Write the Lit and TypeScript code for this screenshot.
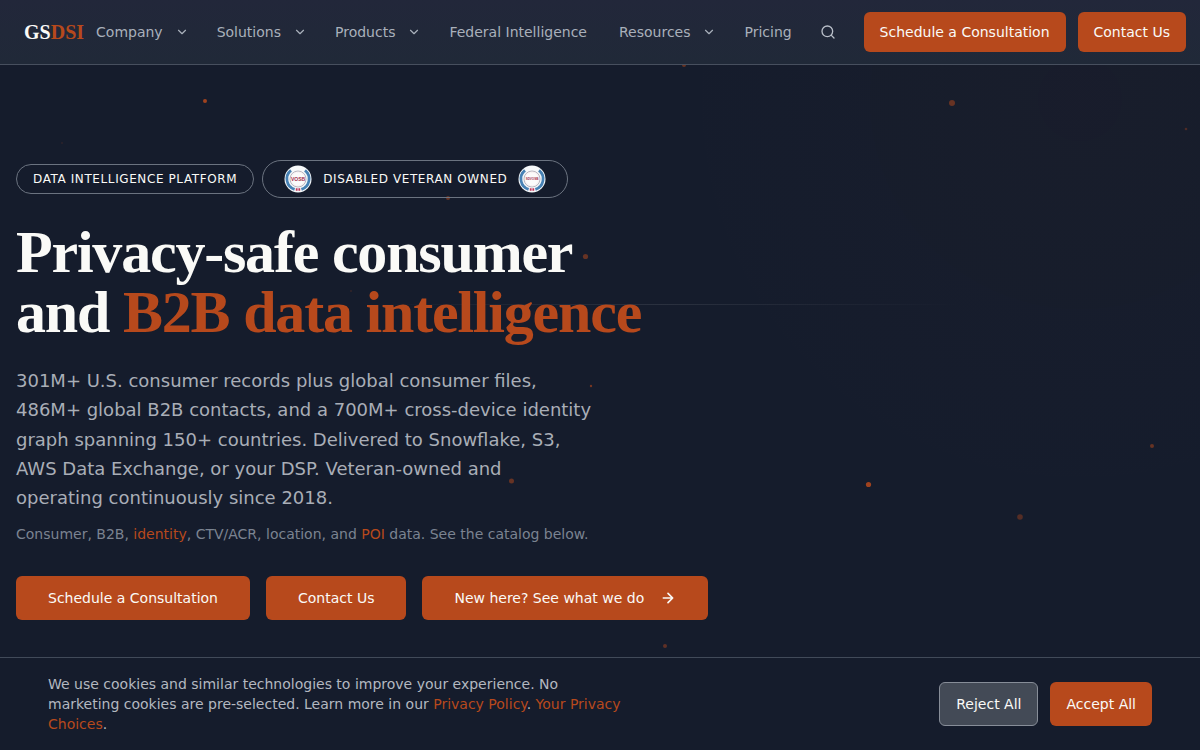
import { LitElement, html, css, svg } from "lit";
import { customElement, property } from "lit/decorators.js";

const chevron = html`<svg class="chevron" viewBox="0 0 24 24" aria-hidden="true"><path d="m6 9 6 6 6-6" /></svg>`;

@customElement("owner-seal")
class OwnerSeal extends LitElement {
  @property() label = "";

  static styles = css`
    :host { display: block; width: 28px; height: 28px; letter-spacing: 0; }
    .seal { display: block; width: 100%; height: 100%; }
    .name { font: bold 5px "Liberation Sans", Arial, sans-serif; fill: #a32c4c; }
    .small { font-size: 3px; }
  `;

  render() {
    const long = this.label.length > 4;
    return html`<svg class="seal" viewBox="0 0 28 28" role="img" aria-label=${this.label}>
      <circle cx="14" cy="14" r="13.5" fill="#f7f9fa" />
      <path d="M7 5.4A11 11 0 0 0 10.6 24.4" fill="none" stroke="#4681b4" stroke-width="2.8" />
      <path d="M21 5.4A11 11 0 0 1 17.4 24.4" fill="none" stroke="#4681b4" stroke-width="2.8" />
      <path d="M7.5 7.2A9.5 9.5 0 0 0 10 22.5M20.500 7.2A9.5 9.5 0 0 1 18 22.500" fill="none" stroke="#dbe8f1" stroke-width=".7" stroke-dasharray="1 1" />
      <circle cx="14" cy="14" r="8" fill="#fbfbfb" stroke="#9a97a3" stroke-width=".7" />
      <circle cx="14" cy="14" r="6.8" fill="none" stroke="#ecd3d7" stroke-width=".5" stroke-dasharray="1 .8" />
      <text class="name ${long ? "small" : ""}" x="14" y=${long ? 15 : 15.8} text-anchor="middle">${this.label}</text>
      <path d="M11.8 23.2h1.8v2.6h-1.8zM14.4 23.2h1.8v2.6h-1.8z" fill="#c0355a" />
    </svg>`;
  }
}

@customElement("app-root")
class AppRoot extends LitElement {
  static styles = css`
    :host {
      display: flex;
      flex-direction: column;
      min-height: 100vh;
      background: #151c2c;
      color: #fafaf7;
      font: 14px/20px "DejaVu Sans", Verdana, sans-serif;
    }
    * { box-sizing: border-box; }
    a { color: inherit; text-decoration: none; }
    .header {
      display: flex;
      align-items: center;
      height: 65px;
      padding: 0 14px 0 24px;
      background: linear-gradient(180deg, #22273a, #202938);
      border-bottom: 1px solid #474f5e;
      position: relative;
      z-index: 1;
    }
    .brand { font: bold 20px/28px "Liberation Serif", "Times New Roman", serif; margin-right: 12px; }
    .accent { color: #b7491c; }
    .nav { display: flex; align-items: center; gap: 32px; color: #a9b0bb; white-space: nowrap; }
    .menu {
      display: flex;
      align-items: center;
      gap: 12px;
      margin-right: -4px;
      padding: 0;
      border: 0;
      background: none;
      color: inherit;
      font: inherit;
    }
    .chevron, .arrow, .glass { fill: none; stroke: currentColor; stroke-width: 2; stroke-linecap: round; stroke-linejoin: round; }
    .chevron { width: 14px; height: 14px; }
    .arrow, .glass { width: 16px; height: 16px; display: block; }
    .arrow { stroke-width: 2.5; }
    .search { margin: 0 auto; padding: 0; border: 0; background: none; color: #b9bfc9; }
    .actions { display: flex; gap: 12px; }
    .btn {
      display: inline-flex;
      align-items: center;
      justify-content: center;
      gap: 16px;
      height: 44px;
      padding: 0 32px;
      border: 0;
      border-radius: 6px;
      background: #b7491c;
      color: #fafaf7;
      font: inherit;
      white-space: nowrap;
    }
    .compact { height: 40px; padding: 0 16px; }
    .choice { padding: 0 16px; }
    .quiet { background: #434a56; border: 1px solid #878d98; }
    .hero {
      flex: 1;
      position: relative;
      padding: 95px 16px 130px;
      background:
        radial-gradient(circle at 90% 5%, rgba(183, 73, 28, .02), transparent 420px),
        #151c2c;
    }
    .sky { position: absolute; inset: 0; width: 100%; height: 100%; overflow: hidden; fill: #b7491c; }
    .content { position: relative; }
    .pills { display: flex; align-items: center; gap: 8px; }
    .pill {
      display: flex;
      align-items: center;
      gap: 11px;
      padding: 6px 16px;
      border: 1px solid #6b7380;
      border-radius: 20px;
      font-size: 12px;
      line-height: 16px;
      letter-spacing: .05em;
    }
    .owned { padding: 4px 21px; }
    .title {
      margin: 24px 0;
      font: bold 60px/60px "Liberation Serif", "Times New Roman", serif;
      letter-spacing: -.02em;
    }
    .line { display: block; }
    .lead { max-width: 576px; margin: 0; font-size: 18px; line-height: 1.625; color: #a9aeb7; }
    .note { margin: 12px 0 32px; color: #7b8391; }
    .ctas { display: flex; flex-wrap: wrap; gap: 16px; }
    .cookies {
      position: fixed;
      inset: auto 0 0;
      z-index: 2;
      display: flex;
      align-items: center;
      justify-content: space-between;
      gap: 24px;
      padding: 16px 48px;
      background: #151c2c;
      border-top: 1px solid #414a59;
    }
    .message { max-width: 576px; margin: 0; color: #b3b8c0; }
  `;

  private menu(name: string) {
    return html`<button class="menu">${name} ${chevron}</button>`;
  }

  private dots = [
    [205, 36, 2, .85], [952, 38, 3, .5], [1186, 64, 1.3, .35], [684, 0, 2, .5],
    [448, 133, 2, .5], [585.5, 191.5, 2.6, .5], [591, 321, 1.2, .6], [511.5, 416, 2.5, .5],
    [868.5, 419.5, 2.6, .85], [1020, 452, 2.8, .4], [1152, 381, 2, .5], [665, 581, 2, .45],
    [62, 78, 1, .15], [351, 226, 1, .2],
  ];

  render() {
    return html`
      <header class="header">
        <a class="brand" href="#">GS<span class="accent">DSI</span></a>
        <nav class="nav" aria-label="Main">
          ${this.menu("Company")} ${this.menu("Solutions")} ${this.menu("Products")}
          <a href="#">Federal Intelligence</a>
          ${this.menu("Resources")}
          <a href="#">Pricing</a>
        </nav>
        <button class="search" aria-label="Search">
          <svg class="glass" viewBox="0 0 24 24"><circle cx="11" cy="11" r="8" /><path d="m21 21-4.3-4.3" /></svg>
        </button>
        <div class="actions">
          <a class="btn compact" href="#">Schedule a Consultation</a>
          <a class="btn compact" href="#">Contact Us</a>
        </div>
      </header>
      <main class="hero">
        <svg class="sky" aria-hidden="true">
          <defs>
            <linearGradient id="beam">
              <stop offset="0" stop-color="#8b8f96" stop-opacity="0" />
              <stop offset=".5" stop-color="#8b8f96" stop-opacity=".18" />
              <stop offset="1" stop-color="#8b8f96" stop-opacity="0" />
            </linearGradient>
          </defs>
          <rect x="30%" y="239" width="50%" height="1" fill="url(#beam)" />
          ${this.dots.map(([x, y, r, o]) => svg`<circle cx=${x} cy=${y} r=${r} opacity=${o} />`)}
        </svg>
        <div class="content">
          <div class="pills">
            <span class="pill">DATA INTELLIGENCE PLATFORM</span>
            <span class="pill owned">
              <owner-seal label="VOSB"></owner-seal>
              DISABLED VETERAN OWNED
              <owner-seal label="SDVOSB"></owner-seal>
            </span>
          </div>
          <h1 class="title">
            <span class="line">Privacy-safe consumer</span>
            <span class="line">and <span class="accent">B2B data intelligence</span></span>
          </h1>
          <p class="lead">
            301M+ U.S. consumer records plus global consumer files, 486M+ global B2B contacts, and a 700M+
            cross-device identity graph spanning 150+ countries. Delivered to Snowflake, S3, AWS Data Exchange,
            or your DSP. Veteran-owned and operating continuously since 2018.
          </p>
          <p class="note">
            Consumer, B2B, <a class="accent" href="#">identity</a>, CTV/ACR, location, and
            <a class="accent" href="#">POI</a> data. See the catalog below.
          </p>
          <div class="ctas">
            <a class="btn" href="#">Schedule a Consultation</a>
            <a class="btn" href="#">Contact Us</a>
            <a class="btn" href="#">New here? See what we do
              <svg class="arrow" viewBox="0 0 24 24" aria-hidden="true"><path d="M5 12h14M12 5l7 7-7 7" /></svg>
            </a>
          </div>
        </div>
      </main>
      <section class="cookies" aria-label="Cookie notice">
        <p class="message">
          We use cookies and similar technologies to improve your experience. No marketing cookies are
          pre-selected. Learn more in our <a class="accent" href="#">Privacy Policy</a>.
          <a class="accent" href="#">Your Privacy Choices</a>.
        </p>
        <div class="actions">
          <button class="btn choice quiet">Reject All</button>
          <button class="btn choice">Accept All</button>
        </div>
      </section>
    `;
  }
}
